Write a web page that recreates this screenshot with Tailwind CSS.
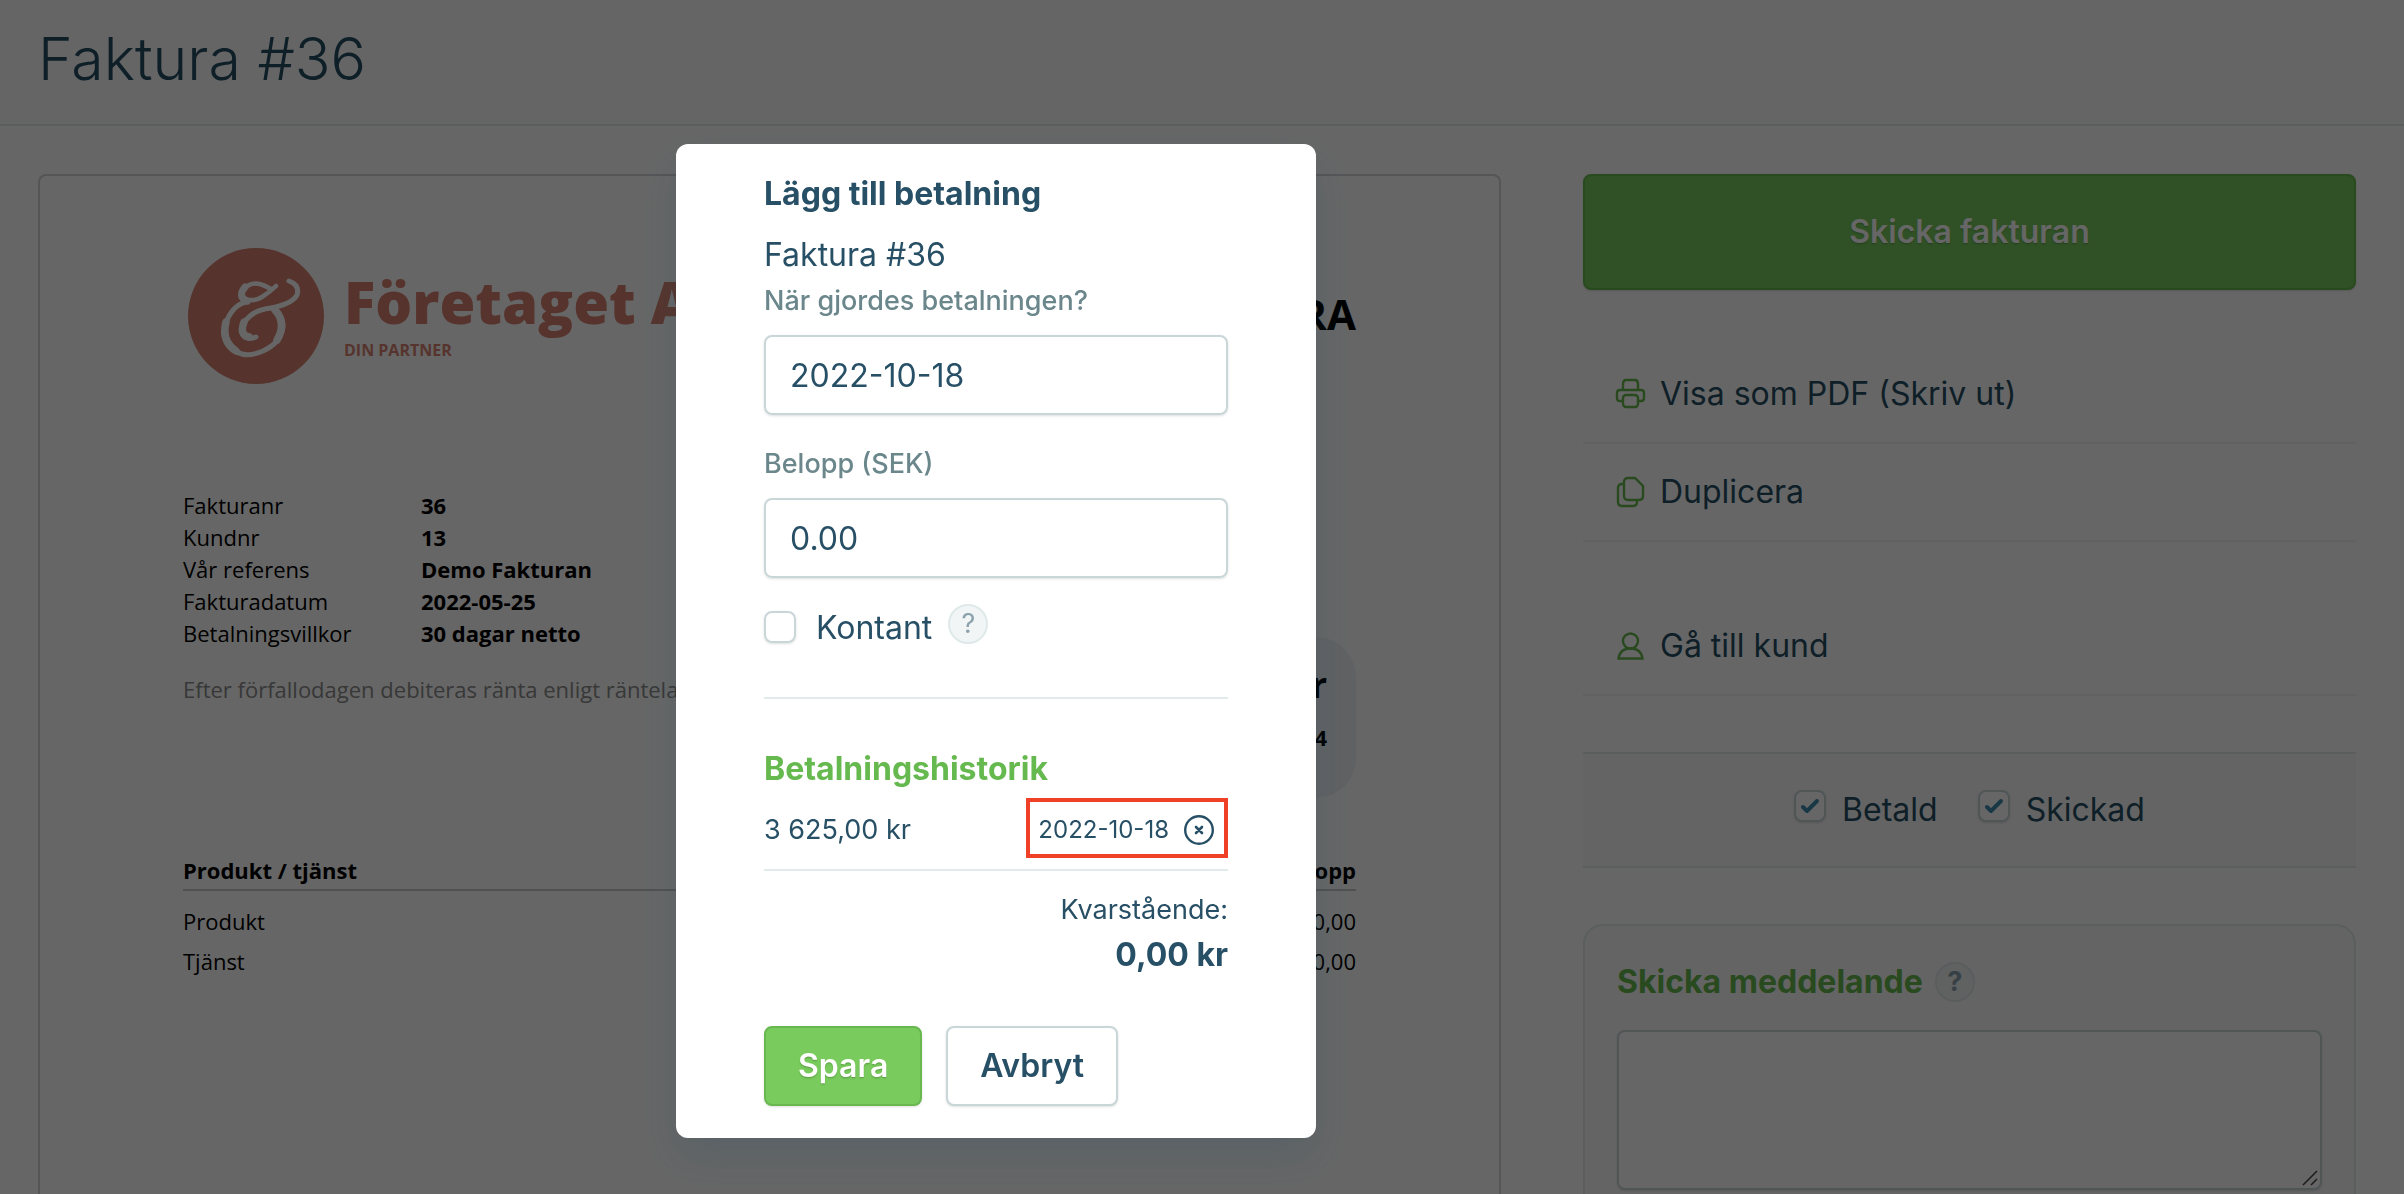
<!DOCTYPE html>
<html lang="sv">
<head>
    <meta charset="UTF-8">
    <meta name="viewport" content="width=device-width, initial-scale=1.0">
    <title>Faktura #36</title>
    <script src="https://cdn.jsdelivr.net/npm/@tailwindcss/browser@4"></script>
</head>
<body class="h-screen flex flex-col overflow-hidden bg-white font-['Inter',sans-serif] text-[32px] leading-10 text-[#274f65]">
    <header class="h-[126px] shrink-0 flex items-center px-[38px] pb-[6px] bg-[#fdfdfd] border-b-2 border-[#e0eaea]">
        <h1 class="text-[59px] leading-[72px] font-light">Faktura #36</h1>
    </header>

    <main class="flex-1 min-h-0 overflow-hidden flex items-stretch gap-[82px] pt-12 pl-[38px] pr-12">
        <!-- invoice preview -->
        <article class="flex-1 border-2 border-b-0 border-[#d2d5d9] rounded-t-lg px-[143px] pt-[72px] font-['Open_Sans',sans-serif] text-[22px] leading-8 text-black">
            <div class="flex justify-between h-[136px]">
                <div class="flex pl-[5px] text-[#d78270]">
                    <svg class="w-[136px] h-[136px]" viewBox="0 0 136 136" fill="none" stroke-linecap="round">
                        <circle cx="68" cy="68" r="68" fill="#d78270"/>
                        <path d="M88 38Q82 44 74 49Q66 54 58 51Q52 47 56 42Q61 34 72 36Q78 38 83 41" stroke="#fff" stroke-width="4.500"/>
                        <path d="M57 39Q49 49 59 53" stroke="#fff" stroke-width="7"/>
                        <path d="M101 33Q112 37 109 47Q104 56 83 60Q64 62 56 75Q50 92 65 90L68 89" stroke="#fff" stroke-width="5"/>
                        <path d="M60 54Q45 55 37 77Q33 95 49 104Q59 110 75 103Q94 94 95 78Q94 64 84 60" stroke="#fff" stroke-width="5"/>
                        <path d="M38 74Q33 93 48 103M87 62Q99 75 89 92M56 74Q51 87 61 89" stroke="#fff" stroke-width="7.500"/>
                    </svg>
                    <div class="pl-5 pt-[22px]">
                        <p class="text-[58px] leading-[64px] font-extrabold whitespace-nowrap">Företaget AB</p>
                        <p class="text-base leading-8 font-bold">DIN PARTNER</p>
                    </div>
                </div>
                <h2 class="pt-10 text-[42px] leading-[52px] font-bold">FAKTURA</h2>
            </div>

            <div class="flex justify-between h-[309px] mt-[105px]">
                <div>
                    <dl class="grid grid-cols-[238px_auto]">
                        <dt>Fakturanr</dt><dd class="font-bold">36</dd>
                        <dt>Kundnr</dt><dd class="font-bold">13</dd>
                        <dt>Vår referens</dt><dd class="font-bold">Demo Fakturan</dd>
                        <dt>Fakturadatum</dt><dd class="font-bold">2022-05-25</dd>
                        <dt>Betalningsvillkor</dt><dd class="font-bold">30 dagar netto</dd>
                    </dl>
                    <p class="mt-6 text-[#8c8c8c]">Efter förfallodagen debiteras ränta enligt räntelagen.</p>
                </div>
                <div class="self-end w-[420px] h-[161px] pt-6 pr-[29px] rounded-[40px] bg-[#f0f3f8] text-right font-bold">
                    <p class="text-[36px] leading-[48px]">3 625,00 kr</p>
                    <p class="pt-3">2022-06-24</p>
                </div>
            </div>

            <table class="w-full mt-14">
                <thead>
                    <tr class="border-b-2 border-[#c8c8c8]">
                        <th class="pb-[3px] text-left font-bold">Produkt / tjänst</th>
                        <th class="pb-[3px] text-right font-bold">Belopp</th>
                    </tr>
                </thead>
                <tbody>
                    <tr><td class="pt-[14px] pb-1">Produkt</td><td class="pt-[14px] pb-1 text-right">2 400,00</td></tr>
                    <tr><td class="py-1">Tjänst</td><td class="py-1 text-right">500,00</td></tr>
                </tbody>
            </table>
        </article>

        <!-- actions -->
        <aside class="w-[773px] shrink-0">
            <button class="w-full h-[116px] rounded-lg border-2 border-[#68b84f] bg-[#78cb5c] text-white font-semibold shadow-sm text-shadow-sm">Skicka fakturan</button>
            <nav class="mt-14">
                <a href="#" class="flex items-center h-[98px] pl-8 gap-[13px] border-b-2 border-[#f0f2f3]">
                    <svg class="w-8 h-8 text-[#68b84f]" viewBox="0 0 32 32" fill="none" stroke="currentColor" stroke-width="2.400">
                        <path d="M8 12V6Q8 2 11 2H20Q23 2 23 6V12M8 23H5Q2 23 2 20V15Q2 12 5 12H26Q29 12 29 15V20Q29 23 26 23H23"/>
                        <rect x="8" y="17" width="15" height="12" rx="3"/>
                    </svg>
                    Visa som PDF (Skriv ut)
                </a>
                <a href="#" class="flex items-center h-[98px] pl-8 gap-[13px] border-b-2 border-[#f0f2f3]">
                    <svg class="w-8 h-8 text-[#68b84f]" viewBox="0 0 32 32" fill="none" stroke="currentColor" stroke-width="2.400">
                        <path d="M13 2H20L28 10V20Q28 24 24 24H13Q9 24 9 20V6Q9 2 13 2Z"/>
                        <path d="M9 8H7Q3 8 3 12V26Q3 30 7 30H18Q22 30 22 26V24"/>
                    </svg>
                    Duplicera
                </a>
                <a href="#" class="flex items-center h-[98px] mt-14 pl-8 gap-[13px] border-b-2 border-[#f0f2f3]">
                    <svg class="w-8 h-8 text-[#68b84f]" viewBox="0 0 32 32" fill="none" stroke="currentColor" stroke-width="2.400">
                        <ellipse cx="15.500" cy="11" rx="7.500" ry="7.500"/>
                        <path d="M3.500 28.500Q5 18.500 15.500 18.500Q26 18.500 27.500 28.500Z"/>
                    </svg>
                    Gå till kund
                </a>
            </nav>

            <div class="flex justify-center gap-10 h-[116px] mt-14 pt-9 border-y-2 border-[#e3eceb] bg-[#fafafa]">
                <label class="flex items-start gap-4">
                    <span class="grid">
                        <input type="checkbox" checked class="col-start-1 row-start-1 appearance-none w-8 h-8 rounded-lg border-2 border-[#c9d6d8] bg-white shadow-sm">
                        <svg class="col-start-1 row-start-1 w-8 h-8 pointer-events-none" viewBox="0 0 32 32" fill="none" stroke="#3c8dae" stroke-width="4" stroke-linecap="round" stroke-linejoin="round"><path d="M9 17L13 21L23 11"/></svg>
                    </span>
                    Betald
                </label>
                <label class="flex items-start gap-4">
                    <span class="grid">
                        <input type="checkbox" checked class="col-start-1 row-start-1 appearance-none w-8 h-8 rounded-lg border-2 border-[#c9d6d8] bg-white shadow-sm">
                        <svg class="col-start-1 row-start-1 w-8 h-8 pointer-events-none" viewBox="0 0 32 32" fill="none" stroke="#3c8dae" stroke-width="4" stroke-linecap="round" stroke-linejoin="round"><path d="M9 17L13 21L23 11"/></svg>
                    </span>
                    Skickad
                </label>
            </div>

            <section class="mt-14 px-8 pt-9 pb-8 border-2 border-[#e3eceb] rounded-[20px] bg-[#fafafa]">
                <div class="flex items-center gap-3 h-10">
                    <label for="message" class="font-bold text-[#66b94f]">Skicka meddelande</label>
                    <button class="w-10 h-10 rounded-full border-2 border-[#dfe8ea] bg-[#f1f5f6] text-[27px] leading-8 font-bold text-[#8ba2ad]">?</button>
                </div>
                <div class="relative mt-7">
                    <textarea id="message" class="block w-full h-40 resize-none rounded-lg border-2 border-[#c9d6d8] bg-white shadow-sm"></textarea>
                    <svg class="absolute right-1 bottom-1 w-4 h-4 pointer-events-none" viewBox="0 0 16 16" stroke="#444" stroke-width="1.500"><path d="M1 15L15 1M9 15L15 9"/></svg>
                </div>
            </section>
        </aside>
    </main>

    <!-- payment dialog -->
    <div class="fixed inset-0 flex justify-center items-start pt-36 pr-[412px] bg-black/60">
        <form class="w-[640px] px-[88px] pt-[30px] pb-8 rounded-xl bg-white shadow-[0_20px_40px_rgba(39,79,101,0.2)]">
            <h2 class="font-bold">Lägg till betalning</h2>
            <p class="mt-[21px]">Faktura #36</p>
            <label for="date" class="block mt-[10px] text-[27px] leading-8 font-medium text-[#6b878c]">När gjordes betalningen?</label>
            <input id="date" type="text" value="2022-10-18" class="block w-full h-20 mt-[18px] px-6 rounded-lg border-2 border-[#c9d6d8] shadow-sm">
            <label for="amount" class="block mt-[33px] text-[27px] leading-8 font-medium text-[#6b878c]">Belopp (SEK)</label>
            <input id="amount" type="text" value="0.00" class="block w-full h-20 mt-[18px] px-6 rounded-lg border-2 border-[#c9d6d8] shadow-sm">

            <div class="flex items-start mt-[26px]">
                <input id="cash" type="checkbox" class="appearance-none w-8 h-8 mt-[7px] rounded-lg border-2 border-[#c9d6d8] shadow-sm">
                <label for="cash" class="pl-5 pt-1">Kontant</label>
                <button type="button" class="w-10 h-10 ml-4 rounded-full border-2 border-[#dfe8ea] bg-[#f1f5f6] text-[27px] leading-8 text-[#8ba2ad]">?</button>
            </div>

            <hr class="mt-[49px] border-t-2 border-[#e3eaeb]">
            <h3 class="mt-[50px] font-bold text-[#66b94f]">Betalningshistorik</h3>
            <div class="flex items-center justify-between mt-[9px]">
                <span class="pt-1 text-[27px] leading-8">3 625,00 kr</span>
                <span class="flex items-center h-[60px] pl-2 pr-[10px] pt-1 gap-[15px] border-4 border-[#f04128] text-2xl">
                    2022-10-18
                    <button type="button" aria-label="Ta bort">
                        <svg class="w-[30px] h-[30px]" viewBox="0 0 30 30" fill="none" stroke="currentColor">
                            <circle cx="15" cy="15" r="13.800" stroke-width="2.400"/>
                            <path d="M12 12L18 18M18 12L12 18" stroke-width="2.600" stroke-linecap="round"/>
                        </svg>
                    </button>
                </span>
            </div>
            <hr class="mt-[11px] border-t-2 border-[#e3eaeb]">
            <p class="mt-[23px] text-right text-[27px] leading-8">Kvarstående:</p>
            <p class="mt-[9px] text-right font-bold">0,00 kr</p>

            <div class="flex gap-6 mt-[51px]">
                <button type="button" class="h-20 px-8 rounded-lg border-2 border-[#68b84f] bg-[#78cb5c] text-white font-semibold shadow-sm text-shadow-sm">Spara</button>
                <button type="button" class="h-20 px-8 rounded-lg border-2 border-[#c9d6d8] bg-white font-semibold shadow-sm">Avbryt</button>
            </div>
        </form>
    </div>
</body>
</html>
